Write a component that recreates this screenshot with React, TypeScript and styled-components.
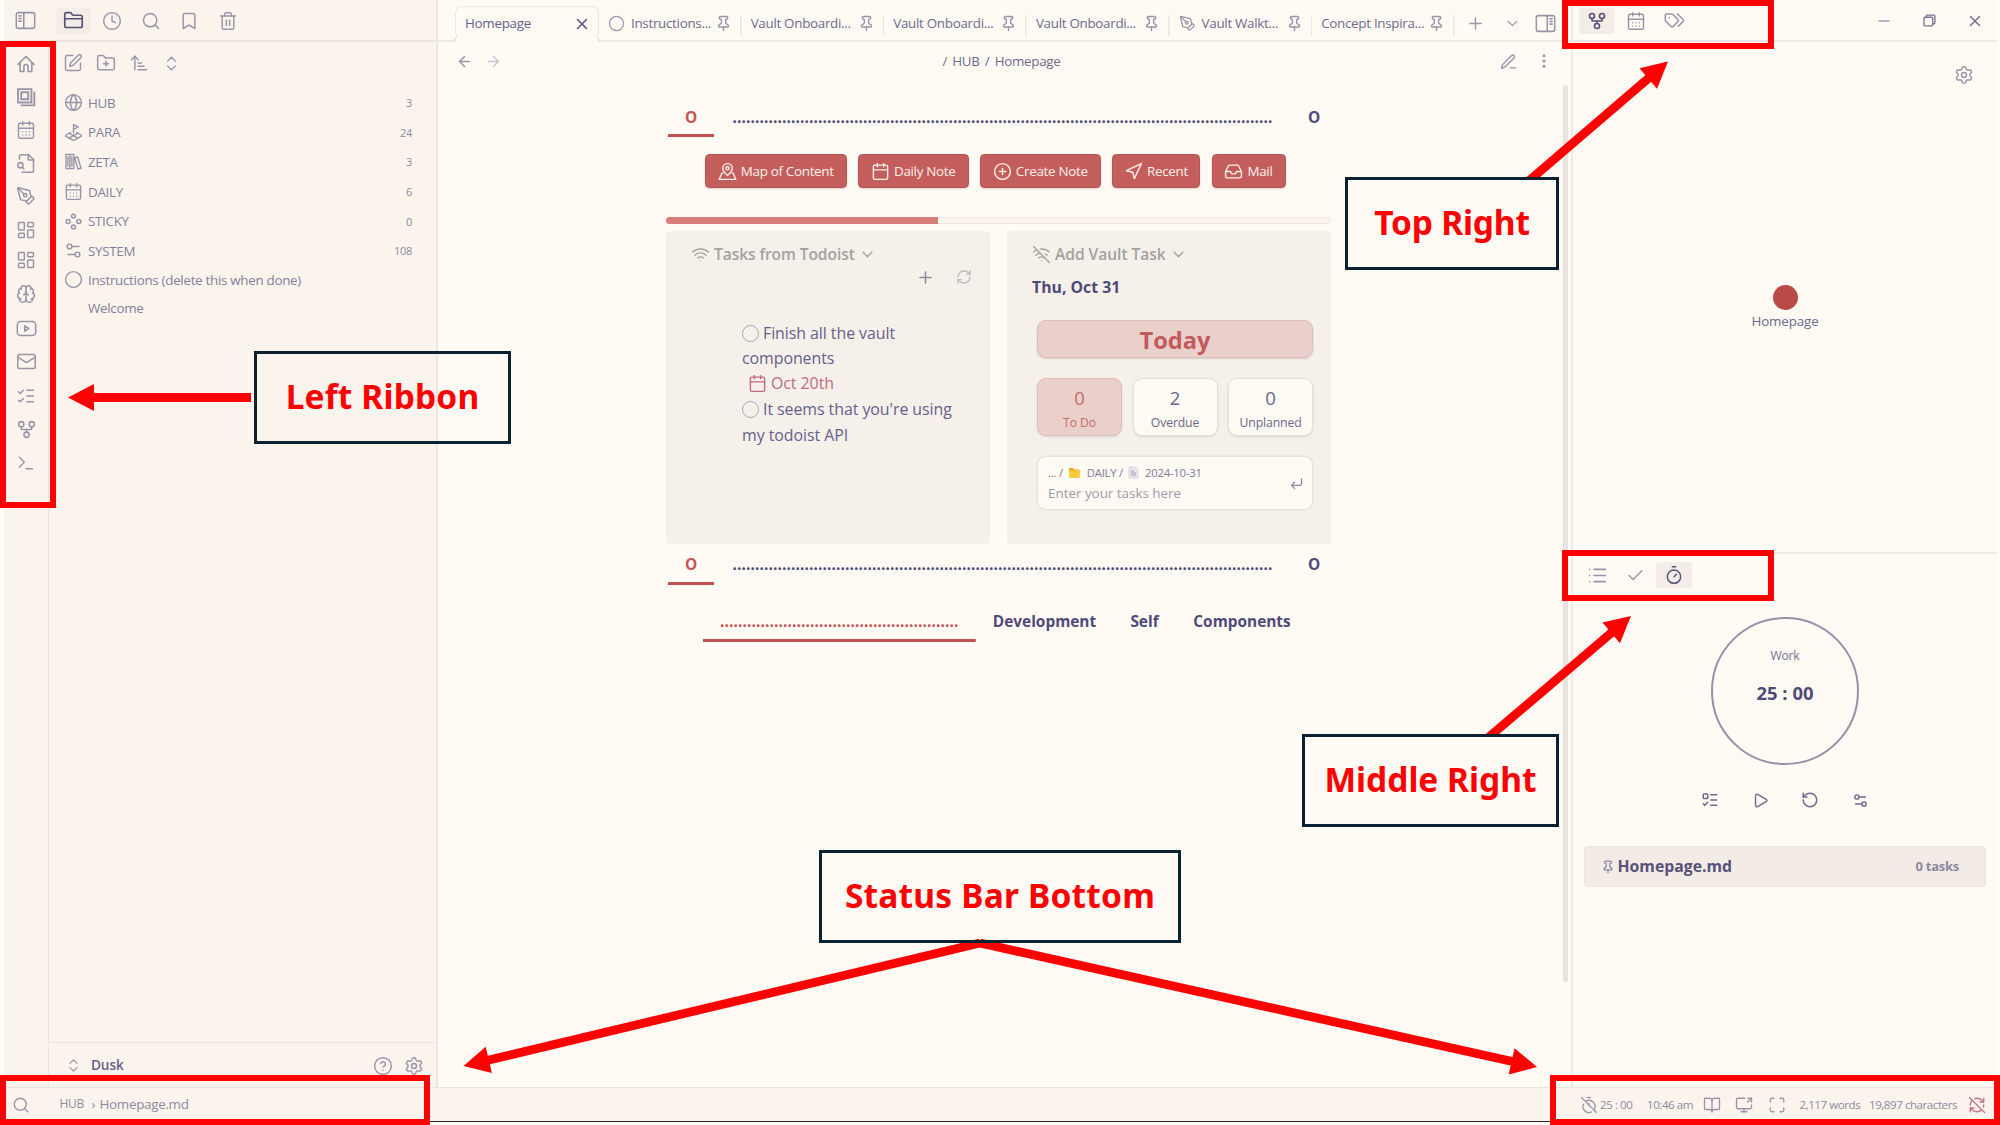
import React from 'react';
import styled, { createGlobalStyle, css } from 'styled-components';
import {
  ArrowLeft, ArrowRight, ArrowUpNarrowWide, BookOpen, Bookmark, Brain, Calendar, CalendarDays, Check,
  ChevronDown, ChevronsUpDown, CircleQuestionMark, CirclePlus, Clock, CornerDownLeft, EllipsisVertical,
  FolderPlus, GitFork, Globe, Inbox, LandPlot, LayoutDashboard, List, ListChecks,
  ListTodo, Mail, Maximize, Navigation, PenTool, Pin, Play, Plus, RefreshCw, RefreshCwOff, RotateCcw,
  ScreenShare, Search, Settings, Settings2, SquarePen, Terminal, Timer, TimerOff, Trash2, Wifi, WifiOff, X,
  Circle,
} from 'lucide-react';

const c = {
  base: '#fffaf3',
  side: '#fbf4ed',
  border: '#ece6e2',
  hover: '#f4ece6',
  text: '#575279',
  soft: '#6f6a8b',
  muted: '#8e899f',
  icon: '#9a94a9',
  red: '#c35d5d',
  card: '#f5f0ea',
  mark: '#ff0000',
  ink: '#0a2230',
};

const Global = createGlobalStyle`
  * { box-sizing: border-box; }
  html, body { margin: 0; padding: 0; }
  body { width: 2000px; height: 1125px; overflow: hidden; background: #fffdfa; }
  svg { display: block; flex: none; }
`;

const Screen = styled.div`
  position: relative;
  width: 2000px;
  height: 1125px;
  overflow: hidden;
  padding: 0 3px 0 4px;
  display: flex;
  flex-direction: column;
  font-family: 'Open Sans', 'Noto Sans', sans-serif;
  font-size: 13.4px;
  color: ${c.text};
`;
const Workspace = styled.div`
  display: flex;
  height: 1087px;
  background: ${c.base};
`;

/* ---------- shared ---------- */
const Slot = styled.div<{ $w?: number; $h?: number; $active?: boolean; $mt?: number; $c?: string }>`
  display: flex;
  align-items: center;
  justify-content: center;
  flex: none;
  width: ${p => p.$w ?? 38.5}px;
  height: ${p => p.$h ?? 26}px;
  margin-top: ${p => p.$mt ?? 0}px;
  border-radius: 4px;
  color: ${p => p.$c ?? (p.$active ? c.text : c.icon)};
  background: ${p => (p.$active ? c.hover : 'transparent')};
`;
const Label = styled.span<{ $s?: number; $w?: number; $c?: string; $ls?: number }>`
  font-size: ${p => p.$s ?? 13.4}px;
  font-weight: ${p => p.$w ?? 400};
  color: ${p => p.$c ?? c.soft};
  letter-spacing: ${p => p.$ls ?? -0.3}px;
  white-space: nowrap;
  line-height: 1.2;
`;

type G = { size?: number; sw?: number; children?: React.ReactNode };
const Glyph = ({ size = 20, sw = 1.75, children }: G) => (
  <svg width={size} height={size} viewBox="0 0 24 24" fill="none" stroke="currentColor" strokeWidth={sw} strokeLinecap="round" strokeLinejoin="round">
    {children}
  </svg>
);
const PanelLeftIcon = () => (
  <Glyph size={21}><rect x="1.5" y="3" width="21" height="18" rx="2.5" /><path d="M10 3v18M4.5 6.7h2.6M4.5 9.7h2.6M4.5 12.7h2.6" /></Glyph>
);
const PanelRightIcon = () => (
  <Glyph size={21}><rect x="1.5" y="3" width="21" height="18" rx="2.5" /><path d="M14 3v18M17 6.7h2.6M17 9.7h2.6M17 12.7h2.6" /></Glyph>
);
const FolderIcon = () => (
  <Glyph size={21} sw={1.9}><path d="M20 20a2 2 0 0 0 2-2V8a2 2 0 0 0-2-2h-7.9a2 2 0 0 1-1.7-.9L9.600 3.900A2 2 0 0 0 7.900 3H4a2 2 0 0 0-2 2v13a2 2 0 0 0 2 2ZM2 10h20" /></Glyph>
);
const HomeIcon = () => (
  <Glyph size={20} sw={1.9}><path d="M2.5 12.5 12 3l9.500 9.500M5 10.500V21h4.500v-6a2.500 2.500 0 0 1 5 0v6H19V10.500" /></Glyph>
);
const StackIcon = () => (
  <Glyph size={20} sw={2.3}><path strokeLinejoin="miter" d="M2.500 2.500h16v16h-16zM6.300 6.300h8.400v8.400H6.300zM22 6.500V22H6.500" /></Glyph>
);
const FileSearchIcon = () => (
  <Glyph size={21}><path d="M7 22h11a2 2 0 0 0 2-2V7.500L14.500 2H6a2 2 0 0 0-2 2v3" /><path d="M14 2v6h6" /><circle cx="5" cy="14" r="3" /><path d="m9 18-1.500-1.500" /></Glyph>
);
const PlayBoxIcon = () => (
  <Glyph size={21}><rect x="1.500" y="4" width="21" height="16" rx="4" /><path d="m10 9 4.500 3L10 15z" /></Glyph>
);
const BooksIcon = () => (
  <Glyph size={19}><path d="M2.500 3h5v18h-5zM7.500 3h5v18h-5zM5 6v12M10 6v12M13.500 7.300l3.800-1 4.200 14.200-3.800 1z" /></Glyph>
);
const DiamondIcon = () => (
  <Glyph size={19} sw={1.9}><circle cx="12" cy="5.200" r="2.500" /><circle cx="12" cy="18.800" r="2.500" /><circle cx="5.200" cy="12" r="2.500" /><circle cx="18.800" cy="12" r="2.500" /></Glyph>
);
const TagsIcon = () => (
  <Glyph size={21}><path d="M1.500 6v5.500a2 2 0 0 0 .6 1.400l5.700 5.700a2 2 0 0 0 2.800 0l5.200-5.200a2 2 0 0 0 0-2.800l-5.700-5.500a2 2 0 0 0-1.400-.6H3a1.500 1.500 0 0 0-1.500 1.500z" /><path d="M6 9h.01M15.500 4.500l6 6a2 2 0 0 1 0 2.900l-5 5" /></Glyph>
);
const MapPersonIcon = () => (
  <Glyph size={19}><path d="M18 8c0 4-6 9-6 9S6 12 6 8a6 6 0 0 1 12 0z" /><circle cx="12" cy="8" r="2" /><path d="M6.500 14H5l-3.500 8h21L19 14h-1.500" /></Glyph>
);
const PencilLineIcon = () => (
  <Glyph size={19}><path d="M14 20h7M16 4.500a2.100 2.100 0 0 1 3 3L7.500 19 3 20.500 4.500 16z" /></Glyph>
);

/* ---------- left side ---------- */
const LeftDock = styled.div`
  width: 434px;
  display: flex;
  flex-direction: column;
  background: ${c.side};
  border-right: 2px solid ${c.border};
`;
const DockHeader = styled.div`
  display: flex;
  align-items: center;
  height: 42px;
  border-bottom: 2px solid ${c.border};
  padding: 1px 0 0 4px;
`;
const HeaderTabs = styled.div`
  display: flex;
  align-items: center;
  margin-left: 13px;
`;
const DockBody = styled.div`
  flex: 1;
  display: flex;
`;
const Ribbon = styled.div`
  width: 45px;
  padding-top: 9px;
  display: flex;
  flex-direction: column;
  border-right: 1px solid ${c.border};
`;
const Explorer = styled.div`
  flex: 1;
  display: flex;
  flex-direction: column;
`;
const NavButtons = styled.div`
  display: flex;
  padding: 8px 0 0 7px;
  height: 46px;
`;
const Tree = styled.div`
  flex: 1;
`;
const TreeRow = styled.div<{ $h?: number }>`
  display: flex;
  align-items: center;
  height: ${p => p.$h ?? 29.6}px;
  padding: 0 24px 0 14px;
`;
const TreeName = styled(Label)`
  flex: 1;
  margin-left: 5px;
`;
const TreeIcon = styled.div`
  width: 20px;
  display: flex;
  justify-content: center;
  color: ${c.icon};
`;
const Profile = styled.div`
  height: 45px;
  border-top: 1.5px solid ${c.border};
  display: flex;
  align-items: center;
  padding: 1px 7px 0 14px;
`;
const ProfileName = styled(TreeName)`
  margin-left: 8px;
`;
const Grow = styled.div`
  flex: 1;
`;

const s = 1.75;

const ribbon: [React.ReactNode, number][] = [
  [<HomeIcon />, 0], [<StackIcon />, 7], [<CalendarDays size={20} strokeWidth={s} />, 7],
  [<FileSearchIcon />, 7], [<PenTool size={20} strokeWidth={s} />, 6.5],
  [<LayoutDashboard size={20} strokeWidth={s} />, 8.5], [<LayoutDashboard size={20} strokeWidth={s} />, 4],
  [<Brain size={20} strokeWidth={s} />, 8], [<PlayBoxIcon />, 8], [<Mail size={21} strokeWidth={s} />, 7.5],
  [<ListChecks size={20} strokeWidth={s} />, 8], [<GitFork size={21} strokeWidth={s} />, 7.5],
  [<Terminal size={20} strokeWidth={s} />, 8],
];

const tree: [React.ReactNode, string, string, number?][] = [
  [<Globe size={19} strokeWidth={s} />, 'HUB', '3'],
  [<LandPlot size={19} strokeWidth={s} />, 'PARA', '24'],
  [<BooksIcon />, 'ZETA', '3'],
  [<CalendarDays size={19} strokeWidth={s} />, 'DAILY', '6'],
  [<DiamondIcon />, 'STICKY', '0'],
  [<Settings2 size={19} strokeWidth={s} />, 'SYSTEM', '108'],
  [<Circle size={19} strokeWidth={s} />, 'Instructions (delete this when done)', '', 28.5],
  [null, 'Welcome', '', 27.5],
];

/* ---------- center ---------- */
const Center = styled.div`
  width: 1135px;
  display: flex;
  flex-direction: column;
  border-right: 2px solid #f0eae5;
`;
const TabStrip = styled.div`
  display: flex;
  height: 42px;
  padding: 6px 0 0 17px;
  box-shadow: inset 0 -2px 0 #efe9e4;
`;
const ActiveTab = styled.div`
  position: relative;
  flex: none;
  width: 144px;
  height: 36px;
  border: 1.5px solid ${c.border};
  border-bottom: none;
  border-radius: 7px 7px 0 0;
  background: ${c.base};
  display: flex;
  align-items: center;
  justify-content: space-between;
  padding: 0 7px 2px 9px;
  &::before, &::after {
    content: '';
    position: absolute;
    bottom: 0;
    width: 6px;
    height: 6px;
    border-bottom: 2px solid ${c.border};
    background: ${c.base};
  }
  &::before {
    left: -6px;
    border-right: 1.5px solid ${c.border};
    border-bottom-right-radius: 6px;
  }
  &::after {
    right: -6px;
    border-left: 1.5px solid ${c.border};
    border-bottom-left-radius: 6px;
  }
`;
const Tab = styled.div`
  display: flex;
  flex: none;
  align-items: center;
  width: 142.65px;
  height: 36px;
  padding: 0 9.5px 2px 9px;
  background: linear-gradient(${c.border}, ${c.border}) right 9px / 1.5px 21px no-repeat;
  color: ${c.icon};
  gap: 6px;
`;
const TabText = styled(Label)`
  flex: 1;
  min-width: 0;
`;
const StripTools = styled.div`
  display: flex;
  align-items: center;
  height: 34px;
  color: ${c.icon};
  padding: 0 15px 0 11px;
  flex: 1;
`;
const ViewHeader = styled.div`
  display: flex;
  align-items: center;
  height: 38px;
  padding: 0 9px 0 17px;
  color: ${c.icon};
`;
const Crumb = styled(Label)`
  flex: 1;
  text-align: center;
  word-spacing: 2px;
`;
const Note = styled.div`
  flex: 1;
  display: flex;
  justify-content: space-between;
  padding: 5px 3px 0 228px;
`;
const Page = styled.div`
  width: 665px;
  display: flex;
  flex-direction: column;
`;
const Scroll = styled.div`
  width: 5px;
  height: 897px;
  border-radius: 3px;
  background: #e9e2df;
`;
const TabRow = styled.div<{ $mt?: number; $pl?: number }>`
  display: flex;
  margin-top: ${p => p.$mt ?? 0}px;
  padding-left: ${p => p.$pl ?? 2}px;
`;
const PageTab = styled.div<{ $w: number; $on?: boolean; $h?: number; $pt?: number }>`
  flex: none;
  width: ${p => p.$w}px;
  height: ${p => p.$h ?? 38}px;
  display: flex;
  align-items: center;
  justify-content: center;
  padding-top: ${p => p.$pt ?? 6}px;
  font-size: 15.4px;
  font-weight: 700;
  line-height: 1;
  white-space: nowrap;
  color: ${p => (p.$on ? '#c65353' : '#4f4a78')};
  ${p => p.$on && css`
    background: linear-gradient(#c65353, #c65353) bottom / 100% 3px no-repeat;
  `}
`;
const Dots = styled.span`
  letter-spacing: 0.11px;
`;
const ButtonRow = styled.div`
  display: flex;
  gap: 11.5px;
  margin: 17px 0 0 39px;
`;
const RedButton = styled.div<{ $w: number }>`
  width: ${p => p.$w}px;
  height: 34px;
  display: flex;
  align-items: center;
  justify-content: center;
  gap: 4px;
  border-radius: 4.5px;
  background: #c35e5d;
  border: 1px solid #b95352;
  box-shadow: 0 1px 2px rgba(90, 60, 60, 0.2);
  color: #fdf1ea;
`;
const Progress = styled.div`
  height: 7px;
  margin-top: 29px;
  border: 1.5px solid #eee8e3;
  border-radius: 4px;
  background: #f9f3ec;
`;
const Fill = styled.div`
  width: 272px;
  height: 7px;
  margin: -1.5px 0 0 -1.5px;
  border-radius: 4px 0 0 4px;
  background: #d67d79;
`;
const Cards = styled.div`
  display: flex;
  justify-content: space-between;
  margin-top: 7px;
`;
const Card = styled.div`
  width: 324px;
  height: 312.5px;
  border-radius: 4px;
  background: ${c.card};
  padding: 13px 18px 0 25px;
`;
const CardTitle = styled.div`
  display: flex;
  align-items: center;
  height: 20px;
  color: #aaa6a4;
  gap: 4px;
`;
const CardTools = styled.div`
  display: flex;
  justify-content: flex-end;
  align-items: center;
  height: 26px;
  color: ${c.muted};
  gap: 21px;
`;
const Faded = styled.div`
  opacity: 0.5;
`;
const Todo = styled.div`
  margin: 31px 0 0 51px;
  font-size: 15.9px;
  letter-spacing: -0.05px;
  line-height: 25px;
`;
const TodoLine = styled.div<{ $pl?: number; $c?: string; $h?: number }>`
  display: flex;
  align-items: center;
  height: ${p => p.$h ?? 25}px;
  gap: 4px;
  padding-left: ${p => p.$pl ?? 0}px;
  color: ${p => p.$c ?? '#66618a'};
  white-space: nowrap;
`;
const Ring = styled.div`
  width: 17px;
  height: 17px;
  border-radius: 50%;
  border: 1.5px solid #aaa4b2;
`;
const DateLine = styled.div`
  font-size: 15.8px;
  font-weight: 700;
  margin-top: 11px;
  line-height: 24px;
  color: #4f4a78;
`;
const Planner = styled.div`
  margin: 21px 0 0 5px;
  width: 276px;
`;
const Today = styled.div`
  height: 38px;
  border: 1px solid #dcbebb;
  border-radius: 9px;
  background: #e9d0cb;
  box-shadow: 0 1px 2px rgba(80, 60, 60, 0.2);
  color: #c35a5b;
  font-size: 23.7px;
  font-weight: 700;
  line-height: 38px;
  text-align: center;
`;
const Stats = styled.div`
  display: flex;
  justify-content: space-between;
  margin-top: 20px;
`;
const Stat = styled.div<{ $on?: boolean }>`
  width: 85px;
  height: 58px;
  border-radius: 9px;
  display: flex;
  flex-direction: column;
  align-items: center;
  padding-top: 6px;
  border: 1px solid ${p => (p.$on ? '#dcbebb' : '#e6e0dc')};
  background: ${p => (p.$on ? '#e9d0cb' : c.base)};
  box-shadow: 0 1px 2px rgba(80, 60, 60, 0.15);
  color: ${p => (p.$on ? '#c96a69' : '#6b668c')};
`;
const StatNum = styled.div`
  font-size: 18.5px;
  line-height: 26px;
`;
const StatName = styled.div`
  font-size: 12.2px;
  line-height: 23px;
  letter-spacing: -0.1px;
`;
const Entry = styled.div`
  height: 54px;
  margin-top: 20px;
  border: 1px solid #e9e3df;
  border-radius: 9px;
  background: ${c.base};
  box-shadow: 0 0 2px rgba(80, 60, 60, 0.12);
  display: flex;
  align-items: center;
  justify-content: space-between;
  padding: 0 8px 0 10px;
  color: ${c.muted};
`;
const EntryText = styled.div`
  display: flex;
  flex-direction: column;
`;
const PathLine = styled.div`
  display: flex;
  align-items: center;
  height: 20px;
  font-size: 11.4px;
  letter-spacing: -0.25px;
  color: #7f7a96;
  white-space: pre;
`;
const Hint = styled.div`
  font-size: 13.4px;
  line-height: 21px;
  color: #a09bac;
`;
const FolderMark = () => (
  <svg width="13" height="12" viewBox="0 0 13 12"><path d="M1 1h4l1.500 1.500H11V5H1z" fill="#f5a623" /><path d="M1 11V3.500h11.500L11.500 11z" fill="#fccb3d" /></svg>
);
const SheetMark = () => (
  <svg width="11" height="13" viewBox="0 0 11 13"><path d="M1 1h6l3 3v8H1z" fill="#ece5ef" stroke="#d5cbdc" strokeWidth=".8" /><path d="M3 5h3M3 7h5M3 9h5" stroke="#9f93b3" strokeWidth=".9" /></svg>
);

/* ---------- right side ---------- */
const RightDock = styled.div`
  flex: 1;
  display: flex;
  flex-direction: column;
`;
const RightHeader = styled.div`
  display: flex;
  align-items: center;
  height: 42px;
  border-bottom: 2px solid #efe9e4;
  padding: 1px 0 0 6px;
`;
const WindowControls = styled.div`
  display: flex;
  align-items: center;
  margin-left: auto;
`;
const GraphPane = styled.div`
  height: 512px;
  border-bottom: 2px solid #efe9e4;
  display: flex;
  flex-direction: column;
  align-items: center;
`;
const GraphTools = styled.div`
  align-self: stretch;
  display: flex;
  justify-content: flex-end;
  padding: 23px 23px 0 0;
  height: 242.5px;
  color: ${c.icon};
`;
const Node = styled.div`
  width: 25px;
  height: 25px;
  border-radius: 50%;
  background: #b94a48;
  margin-bottom: 3px;
`;
const MidTabs = styled.div`
  display: flex;
  align-items: center;
  height: 42px;
  padding-left: 6px;
`;
const Clockface = styled.div`
  width: 148px;
  height: 148px;
  margin: 20.5px auto 0;
  border: 2px solid #9791a7;
  border-radius: 50%;
  display: flex;
  flex-direction: column;
  align-items: center;
  padding-top: 30px;
`;
const ClockTime = styled(Label)`
  margin-top: 19px;
`;
const ClockControls = styled.div`
  display: flex;
  justify-content: center;
  margin-top: 22.5px;
`;
const TaskFile = styled.div`
  height: 41px;
  margin: 33px 11px 0 10.5px;
  border: 1px solid #ebe4df;
  border-radius: 4px;
  background: #f3ece6;
  display: flex;
  align-items: center;
  padding: 0 26px 0 16px;
  gap: 3px;
  color: ${c.muted};
`;

/* ---------- status bar ---------- */
const StatusBar = styled.div`
  height: 35px;
  display: flex;
  align-items: center;
  background: ${c.side};
  border-top: 1.5px solid ${c.border};
  border-bottom: 1.5px solid #2a2526;
  color: ${c.icon};
  padding: 0 11px 0 8px;
`;
const StatusItem = styled.div<{ $w: number }>`
  display: flex;
  flex: none;
  align-items: center;
  justify-content: flex-start;
  gap: 2px;
  width: ${p => p.$w}px;
`;
const StatusText = styled(Label)`
  font-size: 11.5px;
  letter-spacing: -0.42px;
  color: ${c.muted};
`;

/* ---------- annotations ---------- */
const Overlay = styled.div`
  position: absolute;
  inset: 0;
`;
const Frame = styled.div<{ $x: number; $y: number; $w: number; $h: number }>`
  position: absolute;
  left: ${p => p.$x}px;
  top: ${p => p.$y}px;
  width: ${p => p.$w}px;
  height: ${p => p.$h}px;
  border: 6px solid ${c.mark};
`;
const Callout = styled(Frame)<{ $ls?: number }>`
  border: 3px solid ${c.ink};
  display: flex;
  align-items: center;
  justify-content: center;
  padding-bottom: 3px;
  color: ${c.mark};
  font-family: 'Noto Sans', 'Open Sans', sans-serif;
  font-weight: 700;
  font-size: 33.5px;
  letter-spacing: ${p => p.$ls ?? 0}px;
  white-space: nowrap;
`;
const ArrowLayer = styled.svg`
  position: absolute;
  inset: 0;
`;
const Arrow = ({ x1, y1, x2, y2, clip }: { x1: number; y1: number; x2: number; y2: number; clip?: string }) => {
  const len = Math.hypot(x2 - x1, y2 - y1);
  const ux = (x2 - x1) / len;
  const uy = (y2 - y1) / len;
  const bx = x2 - ux * 26;
  const by = y2 - uy * 26;
  return (
    <g clipPath={clip && `url(#${clip})`}>
      <line x1={x1} y1={y1} x2={bx + ux * 2} y2={by + uy * 2} stroke={c.mark} strokeWidth={8.8} />
      <polygon points={`${x2},${y2} ${bx - uy * 13.5},${by + ux * 13.5} ${bx + uy * 13.5},${by - ux * 13.5}`} fill={c.mark} />
    </g>
  );
};

const dots = (n: number) => '.'.repeat(n);

const DotTabs = ({ mt }: { mt: number }) => (
  <TabRow $mt={mt}>
    <PageTab $w={46} $on $h={45}>O</PageTab>
    <PageTab $w={577} $h={45}><Dots>{dots(120)}</Dots></PageTab>
    <PageTab $w={46} $h={45}>O</PageTab>
  </TabRow>
);

export default function App() {
  return (
    <Screen>
      <Global />
      <Workspace>
        <LeftDock>
          <DockHeader>
            <Slot $w={35}><PanelLeftIcon /></Slot>
            <HeaderTabs>
              <Slot $w={35} $active><FolderIcon /></Slot>
              <Slot $w={42}><Clock size={20} strokeWidth={s} /></Slot>
              <Slot $w={35}><Search size={20} strokeWidth={s} /></Slot>
              <Slot $w={42}><Bookmark size={20} strokeWidth={s} /></Slot>
              <Slot $w={35}><Trash2 size={20} strokeWidth={s} /></Slot>
            </HeaderTabs>
          </DockHeader>
          <DockBody>
            <Ribbon>
              {ribbon.map(([icon, mt], i) => <Slot key={i} $w={44} $mt={mt}>{icon}</Slot>)}
            </Ribbon>
            <Explorer>
              <NavButtons>
                <Slot $w={33}><SquarePen size={20} strokeWidth={s} /></Slot>
                <Slot $w={33}><FolderPlus size={20} strokeWidth={s} /></Slot>
                <Slot $w={33}><ArrowUpNarrowWide size={20} strokeWidth={s} /></Slot>
                <Slot $w={33}><ChevronsUpDown size={19} strokeWidth={s} /></Slot>
              </NavButtons>
              <Tree>
                {tree.map(([icon, name, n, h], i) => (
                  <TreeRow key={i} $h={h}>
                    <TreeIcon>{icon}</TreeIcon>
                    <TreeName $c="#85809a">{name}</TreeName>
                    <Label $s={11} $c={c.muted}>{n}</Label>
                  </TreeRow>
                ))}
              </Tree>
              <Profile>
                <TreeIcon><ChevronsUpDown size={17} strokeWidth={s} /></TreeIcon>
                <ProfileName $w={600} $s={13.6} $c="#66618a" $ls={-0.1}>Dusk</ProfileName>
                <Slot $w={31}><CircleQuestionMark size={20} strokeWidth={s} /></Slot>
                <Slot $w={31}><Settings size={20} strokeWidth={s} /></Slot>
              </Profile>
            </Explorer>
          </DockBody>
        </LeftDock>

        <Center>
          <TabStrip>
            <ActiveTab><Label $c="#66618a">Homepage</Label><X size={18} strokeWidth={2} /></ActiveTab>
            <Tab><Circle size={17} strokeWidth={s} /><TabText>Instructions...</TabText><Pin size={17} strokeWidth={2} /></Tab>
            <Tab><TabText>Vault Onboardi...</TabText><Pin size={17} strokeWidth={2} /></Tab>
            <Tab><TabText>Vault Onboardi...</TabText><Pin size={17} strokeWidth={2} /></Tab>
            <Tab><TabText>Vault Onboardi...</TabText><Pin size={17} strokeWidth={2} /></Tab>
            <Tab><PenTool size={17} strokeWidth={s} /><TabText>Vault Walkt...</TabText><Pin size={17} strokeWidth={2} /></Tab>
            <Tab><TabText>Concept Inspira...</TabText><Pin size={17} strokeWidth={2} /></Tab>
            <StripTools>
              <Plus size={19} strokeWidth={s} /><Grow /><ChevronDown size={17} strokeWidth={s} /><Slot $w={14} /><PanelRightIcon />
            </StripTools>
          </TabStrip>
          <ViewHeader>
            <Slot $w={18}><ArrowLeft size={17} strokeWidth={2} /></Slot>
            <Slot $w={40} $c="#cbc5cf"><ArrowRight size={17} strokeWidth={2} /></Slot>
            <Crumb>/ HUB / Homepage</Crumb>
            <Slot $w={36}><PencilLineIcon /></Slot>
            <Slot $w={36}><EllipsisVertical size={18} strokeWidth={2} /></Slot>
          </ViewHeader>
          <Note>
            <Page>
              <DotTabs mt={7} />
              <ButtonRow>
                <RedButton $w={141.5}><MapPersonIcon /><Label $c="#fdf1ea">Map of Content</Label></RedButton>
                <RedButton $w={110.5}><Calendar size={19} strokeWidth={s} /><Label $c="#fdf1ea">Daily Note</Label></RedButton>
                <RedButton $w={120.5}><CirclePlus size={19} strokeWidth={s} /><Label $c="#fdf1ea">Create Note</Label></RedButton>
                <RedButton $w={88}><Navigation size={19} strokeWidth={s} /><Label $c="#fdf1ea">Recent</Label></RedButton>
                <RedButton $w={74}><Inbox size={19} strokeWidth={s} /><Label $c="#fdf1ea">Mail</Label></RedButton>
              </ButtonRow>
              <Progress><Fill /></Progress>
              <Cards>
                <Card>
                  <CardTitle>
                    <Wifi size={19} strokeWidth={s} />
                    <Label $s={15.6} $w={600} $c="#a5a19f" $ls={-0.1}>Tasks from Todoist</Label>
                    <ChevronDown size={17} strokeWidth={2} />
                  </CardTitle>
                  <CardTools><Plus size={19} strokeWidth={2} /><Faded><RefreshCw size={16} strokeWidth={2} /></Faded></CardTools>
                  <Todo>
                    <TodoLine><Ring />Finish all the vault</TodoLine>
                    <TodoLine>components</TodoLine>
                    <TodoLine $pl={6} $c="#c26a7d" $h={25.5}><Calendar size={19} strokeWidth={s} />Oct 20th</TodoLine>
                    <TodoLine $h={26}><Ring />It seems that you're using</TodoLine>
                    <TodoLine>my todoist API</TodoLine>
                  </Todo>
                </Card>
                <Card>
                  <CardTitle>
                    <WifiOff size={19} strokeWidth={s} />
                    <Label $s={15.6} $w={600} $c="#a5a19f" $ls={-0.05}>Add Vault Task</Label>
                    <ChevronDown size={17} strokeWidth={2} />
                  </CardTitle>
                  <DateLine>Thu, Oct 31</DateLine>
                  <Planner>
                    <Today>Today</Today>
                    <Stats>
                      <Stat $on><StatNum>0</StatNum><StatName>To Do</StatName></Stat>
                      <Stat><StatNum>2</StatNum><StatName>Overdue</StatName></Stat>
                      <Stat><StatNum>0</StatNum><StatName>Unplanned</StatName></Stat>
                    </Stats>
                    <Entry>
                      <EntryText>
                        <PathLine>{'... /  '}<FolderMark />{'  DAILY /  '}<SheetMark />{'  2024-10-31'}</PathLine>
                        <Hint>Enter your tasks here</Hint>
                      </EntryText>
                      <CornerDownLeft size={15} strokeWidth={2} />
                    </Entry>
                  </Planner>
                </Card>
              </Cards>
              <DotTabs mt={-4} />
              <TabRow $mt={16} $pl={37}>
                <PageTab $w={272.5} $on $h={41} $pt={2}><Dots>{dots(53)}</Dots></PageTab>
                <PageTab $w={138} $h={41} $pt={2}>Development</PageTab>
                <PageTab $w={62} $h={41} $pt={2}>Self</PageTab>
                <PageTab $w={133} $h={41} $pt={2}>Components</PageTab>
              </TabRow>
            </Page>
            <Scroll />
          </Note>
        </Center>

        <RightDock>
          <RightHeader>
            <Slot $w={36} $active><GitFork size={20} strokeWidth={2} /></Slot>
            <Slot $w={41}><CalendarDays size={20} strokeWidth={s} /></Slot>
            <Slot $w={36}><TagsIcon /></Slot>
            <WindowControls>
              <Slot $w={45} $c="#77718f"><Glyph size={14} sw={2}><path d="M3 12h18" /></Glyph></Slot>
              <Slot $w={46} $c="#77718f"><Glyph size={13} sw={2.4}><rect x="2" y="6" width="16" height="16" rx="2" /><path d="M6 6V4a2 2 0 0 1 2-2h12a2 2 0 0 1 2 2v12a2 2 0 0 1-2 2h-2" /></Glyph></Slot>
              <Slot $w={45} $c="#77718f"><X size={18} strokeWidth={2} /></Slot>
            </WindowControls>
          </RightHeader>
          <GraphPane>
            <GraphTools><Settings size={20} strokeWidth={s} /></GraphTools>
            <Node />
            <Label $ls={-0.15}>Homepage</Label>
          </GraphPane>
          <MidTabs>
            <Slot $w={36}><List size={21} strokeWidth={s} /></Slot>
            <Slot $w={41}><Check size={19} strokeWidth={s} /></Slot>
            <Slot $w={36} $active><Timer size={20} strokeWidth={s} /></Slot>
          </MidTabs>
          <Clockface>
            <Label $s={12.2} $c="#77718f" $ls={-0.2}>Work</Label>
            <ClockTime $s={18.4} $w={700} $c="#4f4a78" $ls={0}>25 : 00</ClockTime>
          </Clockface>
          <ClockControls>
            <Slot $w={50} $c={c.soft}><ListTodo size={18} strokeWidth={2} /></Slot>
            <Slot $w={50} $c={c.soft}><Play size={17} strokeWidth={2} /></Slot>
            <Slot $w={50} $c={c.soft}><RotateCcw size={18} strokeWidth={2} /></Slot>
            <Slot $w={50} $c={c.soft}><Settings2 size={17} strokeWidth={2} /></Slot>
          </ClockControls>
          <TaskFile>
            <Pin size={14} strokeWidth={2.2} />
            <Label $s={15.8} $w={700} $c="#575279" $ls={0}>Homepage.md</Label>
            <Grow />
            <Label $s={13} $w={700} $c={c.muted} $ls={-0.25}>0 tasks</Label>
          </TaskFile>
        </RightDock>
      </Workspace>

      <StatusBar>
        <StatusItem $w={47.5}><Search size={18} strokeWidth={s} /></StatusItem>
        <StatusItem $w={32}><Label $s={12} $c={c.muted}>HUB</Label></StatusItem>
        <StatusItem $w={8}><Label $s={13} $c={c.muted}>›</Label></StatusItem>
        <Label $c={c.muted}>Homepage.md</Label>
        <Grow />
        <StatusItem $w={67}><TimerOff size={18} strokeWidth={s} /><StatusText>25 : 00</StatusText></StatusItem>
        <StatusItem $w={56}><StatusText>10:46 am</StatusText></StatusItem>
        <StatusItem $w={32}><BookOpen size={18} strokeWidth={s} /></StatusItem>
        <StatusItem $w={33}><ScreenShare size={18} strokeWidth={s} /></StatusItem>
        <StatusItem $w={31.5}><Maximize size={18} strokeWidth={s} /></StatusItem>
        <StatusItem $w={69.5}><StatusText>2,117 words</StatusText></StatusItem>
        <StatusItem $w={99}><StatusText>19,897 characters</StatusText></StatusItem>
        <Slot $w={18} $c="#c0728a"><RefreshCwOff size={18} strokeWidth={s} /></Slot>
      </StatusBar>

      <Overlay>
        <ArrowLayer width="2000" height="1125">
          <defs>
            <clipPath id="above-top"><rect x="0" y="0" width="2000" height="178" /></clipPath>
            <clipPath id="above-middle"><rect x="0" y="0" width="2000" height="735" /></clipPath>
          </defs>
          <Arrow x1={251} y1={397.5} x2={68} y2={397.5} />
          <Arrow x1={1520} y1={188.5} x2={1668} y2={61.5} clip="above-top" />
          <Arrow x1={1479} y1={745.5} x2={1631} y2={616} clip="above-middle" />
          <Arrow x1={980} y1={943} x2={463.5} y2={1066} />
          <Arrow x1={980} y1={943} x2={1537} y2={1067} />
        </ArrowLayer>
        <Frame $x={0} $y={41} $w={56} $h={467} />
        <Frame $x={1562} $y={0} $w={212} $h={49} />
        <Frame $x={1562} $y={550} $w={212} $h={51} />
        <Frame $x={0} $y={1075} $w={430} $h={50} />
        <Frame $x={1550} $y={1075} $w={450} $h={50} />
        <Callout $x={254} $y={351} $w={257} $h={93} $ls={0.15}>Left Ribbon</Callout>
        <Callout $x={1345} $y={177} $w={214} $h={93} $ls={-0.2}>Top Right</Callout>
        <Callout $x={1302} $y={734} $w={257} $h={93}>Middle Right</Callout>
        <Callout $x={819} $y={850} $w={362} $h={93} $ls={0.2}>Status Bar Bottom</Callout>
      </Overlay>
    </Screen>
  );
}
